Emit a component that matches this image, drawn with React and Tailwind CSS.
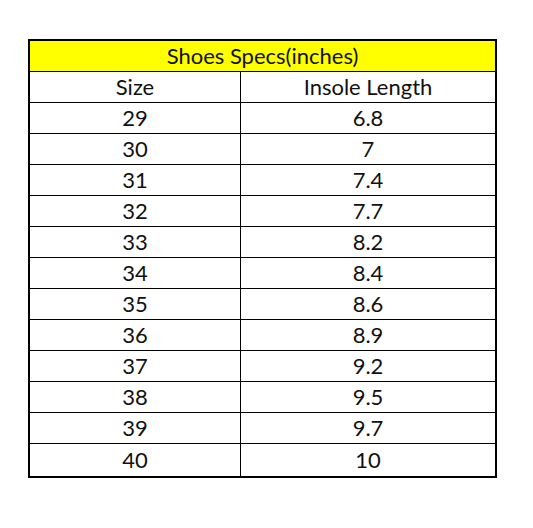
const rows = [
  ["29", "6.8"],
  ["30", "7"],
  ["31", "7.4"],
  ["32", "7.7"],
  ["33", "8.2"],
  ["34", "8.4"],
  ["35", "8.6"],
  ["36", "8.9"],
  ["37", "9.2"],
  ["38", "9.5"],
  ["39", "9.7"],
  ["40", "10"],
];

export default function App() {
  return (
    <div className="w-[533px] h-[528px] bg-white pt-[39px] pl-[28px]" style={{ fontFamily: "Lato, 'Open Sans', sans-serif" }}>
      <div className="w-[469px] border-2 border-black text-[22px] leading-none text-[#111]">
        <div className="h-[31px] bg-[#ffff00] border-b border-black flex items-center justify-center">
          Shoes Specs(inches)
        </div>
        <div className="grid grid-cols-[211px_1fr] h-[31px] border-b border-black">
          <div className="flex items-center justify-center border-r border-black">Size</div>
          <div className="flex items-center justify-center">Insole Length</div>
        </div>
        {rows.map(([size, len], i) => (
          <div
            key={size}
            className={i === rows.length - 1 ? "grid grid-cols-[211px_1fr] h-[32px]" : "grid grid-cols-[211px_1fr] h-[31px] border-b border-black"}
          >
            <div className="flex items-center justify-center border-r border-black">{size}</div>
            <div className="flex items-center justify-center">{len}</div>
          </div>
        ))}
      </div>
    </div>
  );
}
